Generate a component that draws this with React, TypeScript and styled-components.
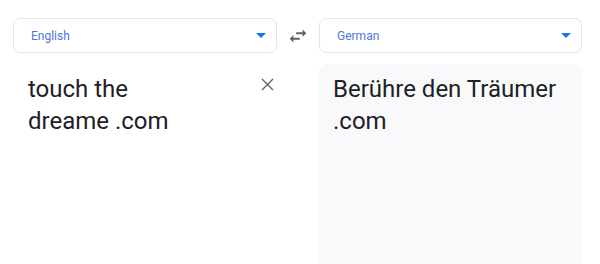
import styled, { createGlobalStyle } from "styled-components";

const GlobalStyle = createGlobalStyle`
    html, body {
        margin: 0;
        padding: 0;
        background: #ffffff;
        font-family: Roboto, "Liberation Sans", Arial, sans-serif;
    }
`;

const TranslatorWrapper = styled.main`
    display: grid;
    grid-template-columns: 264px 42px 263px;
    grid-template-rows: 35px 200px;
    row-gap: 11px;
    padding: 18px 0 0 13px;
    height: 264px;
    box-sizing: border-box;
    overflow: hidden;
`;

const LanguageSelect = styled.div`
    display: flex;
    align-items: center;
    justify-content: space-between;
    box-sizing: border-box;
    padding: 0 10px 0 17px;
    border: 1px solid #e3e5e8;
    border-radius: 7px;
    font-size: 12px;
    color: #4f77d8;
`;

const DropArrow = styled.span`
    width: 0;
    height: 0;
    border-left: 5px solid transparent;
    border-right: 5px solid transparent;
    border-top: 5px solid #1a73e8;
`;

const SwapButton = styled.div`
    display: flex;
    align-items: center;
    justify-content: center;
    color: #5f6368;
`;

const TextPanel = styled.div<{ $output?: boolean }>`
    display: flex;
    align-items: flex-start;
    justify-content: space-between;
    box-sizing: border-box;
    padding: ${(p) => (p.$output ? "9px 14px" : "9px 3px 9px 15px")};
    background: ${(p) => (p.$output ? "#f8f9fa" : "transparent")};
    border-radius: 8px 8px 0 0;
    height: 240px;
`;

const PanelText = styled.div`
    font-size: 24px;
    line-height: 32px;
    color: #202124;
`;

const ClearButton = styled.div`
    display: flex;
    margin-top: 5px;
    color: #5f6368;
`;

const App = () => {
    return (
        <>
            <GlobalStyle />
            <TranslatorWrapper>
                <LanguageSelect>
                    <span>English</span>
                    <DropArrow />
                </LanguageSelect>
                <SwapButton>
                    <svg width="22" height="22" viewBox="0 0 24 24" fill="currentColor">
                        <path d="M6.99 11L3 15l3.99 4v-3H14v-2H6.99v-3zM21 9l-3.99-4v3H10v2h7.01v3L21 9z" />
                    </svg>
                </SwapButton>
                <LanguageSelect>
                    <span>German</span>
                    <DropArrow />
                </LanguageSelect>

                <TextPanel>
                    <PanelText>
                        touch the
                        <br />
                        dreame .com
                    </PanelText>
                    <ClearButton>
                        <svg width="13" height="13" viewBox="0 0 13 13" stroke="currentColor" strokeWidth="1.4">
                            <path d="M1 1L12 12M12 1L1 12" />
                        </svg>
                    </ClearButton>
                </TextPanel>
                <div />
                <TextPanel $output>
                    <PanelText>
                        Berühre den Träumer
                        <br />
                        .com
                    </PanelText>
                </TextPanel>
            </TranslatorWrapper>
        </>
    );
};

export default App;
